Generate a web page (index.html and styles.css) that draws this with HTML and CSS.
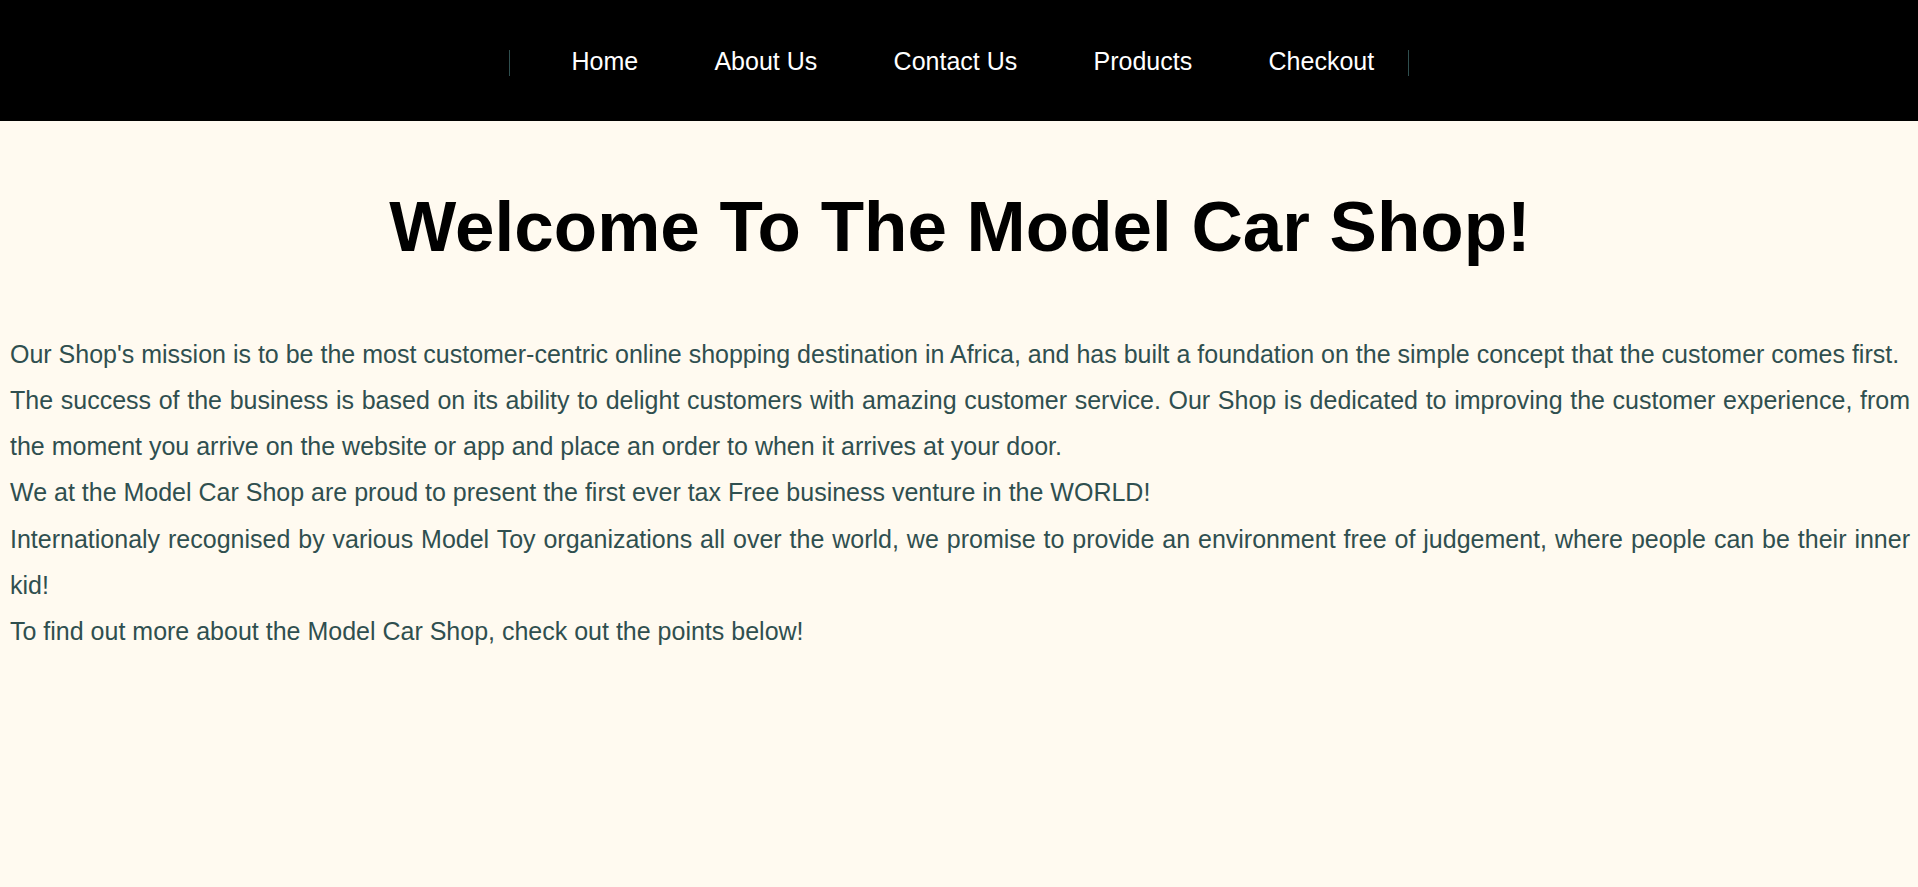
FILE: index.html
```html
<!DOCTYPE html>
<html lang="en">
<head>
<meta charset="utf-8">
<title>Model Car Shop</title>
<link rel="stylesheet" href="styles.css">
</head>
<body>
<header class="site-header">
  <nav>
    <ul class="nav-list">
      <li><a href="#">Home</a></li>
      <li><a href="#">About Us</a></li>
      <li><a href="#">Contact Us</a></li>
      <li><a href="#">Products</a></li>
      <li><a href="#">Checkout</a></li>
    </ul>
  </nav>
</header>
<main class="content">
  <h1 class="title">Welcome To The Model Car Shop!</h1>
  <p class="text">Our Shop's mission is to be the most customer-centric online shopping destination in Africa, and has built a foundation on the simple concept that the customer comes first.</p>
  <p class="text">The success of the business is based on its ability to delight customers with amazing customer service. Our Shop is dedicated to improving the customer experience, from the moment you arrive on the website or app and place an order to when it arrives at your door.</p>
  <p class="text">We at the Model Car Shop are proud to present the first ever tax Free business venture in the WORLD!</p>
  <p class="text">Internationaly recognised by various Model Toy organizations all over the world, we promise to provide an environment free of judgement, where people can be their inner kid!</p>
  <p class="text">To find out more about the Model Car Shop, check out the points below!</p>
</main>
</body>
</html>
```

FILE: styles.css
```css
html, body {
  margin: 0;
  padding: 0;
}
body {
  background: #fffaf0;
  font-family: "Liberation Sans", Arial, sans-serif;
  min-height: 887px;
}
.site-header {
  background: #000;
  height: 121px;
  box-sizing: border-box;
  padding-top: 50px;
  display: flex;
  justify-content: center;
  align-items: flex-start;
}
.nav-list {
  display: flex;
  gap: 76.3px;
  list-style: none;
  margin: 0;
  padding: 0 33.8px 0 61.4px;
  height: 26px;
  border-left: 1px solid #2f4f4f;
  border-right: 1px solid #2f4f4f;
}
.nav-list a {
  display: block;
  color: #fff;
  text-decoration: none;
  font-size: 25px;
  line-height: 22px;
  white-space: nowrap;
}
.content {
  padding: 0 8px 0 10px;
}
.title {
  margin: 66px 0 63.5px;
  font-size: 71px;
  line-height: 80px;
  font-weight: bold;
  color: #000;
  text-align: center;
}
.text {
  margin: 0;
  font-size: 25px;
  line-height: 46.25px;
  color: #2f4f4f;
  text-align: justify;
}
```
